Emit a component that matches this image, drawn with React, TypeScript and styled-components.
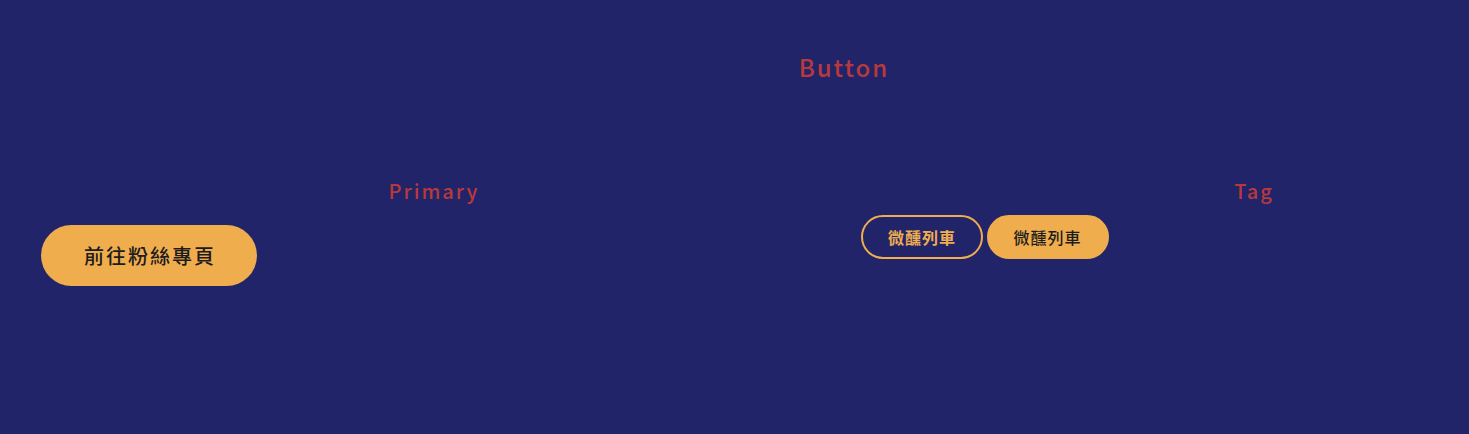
import React from "react";
import styled, { createGlobalStyle } from "styled-components";

const Global = createGlobalStyle`
  html, body {
    margin: 0;
    padding: 0;
    background: #22246a;
    overflow: hidden;
  }
  body {
    font-family: "Noto Sans CJK TC", "Noto Sans", sans-serif;
  }
`;

const Page = styled.div`
  width: 1688px;
  box-sizing: border-box;
  padding: 49px 41px 0;
  min-height: 434px;
`;

const Title = styled.h1`
  margin: 0 0 92px;
  text-align: center;
  color: #b8393c;
  font-size: 24px;
  font-weight: 500;
  letter-spacing: 2px;
  line-height: 36px;
`;

const Columns = styled.div`
  display: grid;
  grid-template-columns: 786px 786px;
  column-gap: 34px;
`;

const Section = styled.section``;

const Label = styled.h2<{ $gap: number }>`
  margin: 0 0 ${(p) => p.$gap}px;
  text-align: center;
  color: #b8393c;
  font-size: 20px;
  font-weight: 500;
  letter-spacing: 2px;
  line-height: 28px;
`;

const PrimaryButton = styled.button`
  height: 61px;
  padding: 0 41px 0 43px;
  border: none;
  border-radius: 31px;
  background: #f0ad4e;
  color: #1c1c1c;
  font-family: inherit;
  font-size: 20px;
  font-weight: 500;
  letter-spacing: 2px;
  cursor: pointer;
`;

const TagButton = styled.button<{ $filled?: boolean }>`
  width: 122px;
  height: 44px;
  box-sizing: border-box;
  border: 2px solid #f0ad4e;
  border-radius: 22px;
  background: ${(p) => (p.$filled ? "#f0ad4e" : "transparent")};
  color: ${(p) => (p.$filled ? "#1c1c1c" : "#f0ad4e")};
  font-family: inherit;
  font-size: 16px;
  font-weight: ${(p) => (p.$filled ? 500 : 700)};
  letter-spacing: 1px;
  cursor: pointer;
  vertical-align: top;
`;

export default function App() {
  return (
    <>
      <Global />
      <Page>
        <Title>Button</Title>
        <Columns>
          <Section>
            <Label $gap={20}>Primary</Label>
            <PrimaryButton>前往粉絲專頁</PrimaryButton>
          </Section>
          <Section>
            <Label $gap={10}>Tag</Label>
            <TagButton>微醺列車</TagButton> <TagButton $filled>微醺列車</TagButton>
          </Section>
        </Columns>
      </Page>
    </>
  );
}
